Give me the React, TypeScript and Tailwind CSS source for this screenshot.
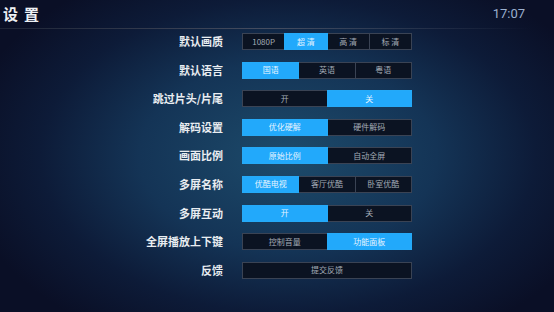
import React from 'react';

type Row = { label: string; options: string[]; active: number };

const rows: Row[] = [
  { label: '默认画质', options: ['1080P', '超 清', '高 清', '标 清'], active: 1 },
  { label: '默认语言', options: ['国语', '英语', '粤语'], active: 0 },
  { label: '跳过片头/片尾', options: ['开', '关'], active: 1 },
  { label: '解码设置', options: ['优化硬解', '硬件解码'], active: 0 },
  { label: '画面比例', options: ['原始比例', '自动全屏'], active: 0 },
  { label: '多屏名称', options: ['优酷电视', '客厅优酷', '卧室优酷'], active: 0 },
  { label: '多屏互动', options: ['开', '关'], active: 0 },
  { label: '全屏播放上下键', options: ['控制音量', '功能面板'], active: 1 },
  { label: '反馈', options: ['提交反馈'], active: -1 },
];

function Segmented({ options, active }: { options: string[]; active: number }) {
  return (
    <div className="flex h-[17px] w-[170px]">
      {options.map((opt, i) => (
        <div
          key={opt}
          className={
            'flex flex-1 items-center justify-center border text-[8px] leading-none ' +
            (i > 0 ? '-ml-px ' : '') +
            (i === active
              ? 'relative z-10 border-[#25aaf8] bg-[#22a9fb] text-[#e6f4ff]'
              : 'border-[#3a4354] bg-[#0b1322] text-[#a3abb6]')
          }
        >
          {opt}
        </div>
      ))}
    </div>
  );
}

export default function App() {
  return (
    <div
      className="relative h-[312px] w-[554px] overflow-hidden bg-[#0a1027] bg-[radial-gradient(ellipse_330px_210px_at_52%_50%,#1d4b6b_0%,#143456_45%,#0d1b38_75%,#0a0f26_100%)] text-white"
      style={{ fontFamily: '"Noto Sans CJK SC", "Noto Sans", sans-serif' }}
    >
      <div className="flex items-start justify-between">
        <div className="pl-[3px] pt-[5px] text-[15px] font-bold leading-[18px] tracking-[6px] text-[#eef1f4]">设置</div>
        <div className="pr-[29px] pt-[7px] text-[13px] leading-[14px] text-[#9cb0cf]" style={{ fontFamily: 'Roboto, sans-serif' }}>
          17:07
        </div>
      </div>
      <div className="mt-[5px] h-px w-[532px] bg-gradient-to-r from-[#1d2436] via-[#454d60] to-transparent" />
      <div className="mt-[4px] grid grid-cols-[223px_170px] gap-x-[19px] gap-y-[11.6px]">
        {rows.map((r) => (
          <React.Fragment key={r.label}>
            <div className="flex h-[17px] items-center justify-end text-[11px] font-bold leading-none text-[#e9edf1]">
              {r.label}
            </div>
            <Segmented options={r.options} active={r.active} />
          </React.Fragment>
        ))}
      </div>
    </div>
  );
}
